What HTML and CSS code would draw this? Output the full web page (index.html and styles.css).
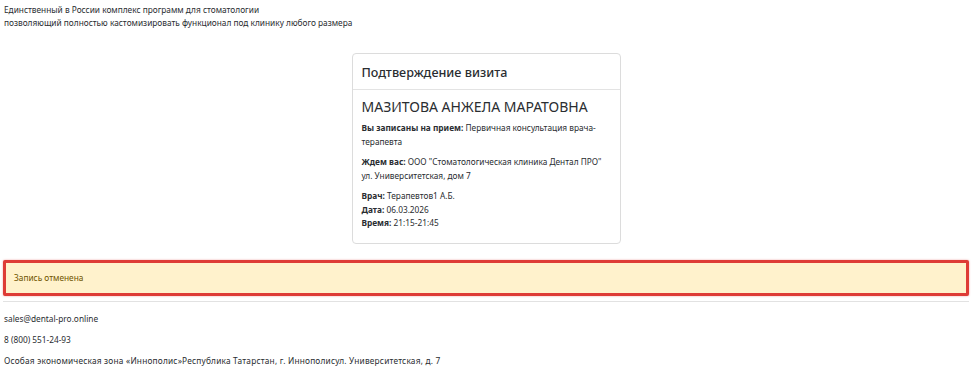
FILE: index.html
```html
<!DOCTYPE html>
<html lang="ru">
<head>
  <meta charset="UTF-8" />
  <meta name="viewport" content="width=device-width, initial-scale=1.0" />
  <title>Подтверждение визита</title>
  <link rel="stylesheet" href="styles.css">
</head>
<body>
  <div class="intro">
    <p>Единственный в России комплекс программ для стоматологии</p>
    <p>позволяющий полностью кастомизировать функционал под клинику любого размера</p>
  </div>

  <div class="card">
    <div class="card-header">Подтверждение визита</div>
    <div class="card-body">
      <h2 class="patient">МАЗИТОВА АНЖЕЛА МАРАТОВНА</h2>
      <p><b>Вы записаны на прием:</b> Первичная консультация врача-терапевта</p>
      <p><b>Ждем вас:</b> ООО "Стоматологическая клиника Дентал ПРО" ул. Университетская, дом 7</p>
      <p>
        <b>Врач:</b> Терапевтов1 А.Б.<br>
        <b>Дата:</b> 06.03.2026<br>
        <b>Время:</b> 21:15-21:45
      </p>
    </div>
  </div>

  <div class="alert">Запись отменена</div>

  <hr>

  <footer class="footer">
    <p>sales@dental-pro.online</p>
    <p>8 (800) 551-24-93</p>
    <p class="address">Особая экономическая зона «Иннополис»Республика Татарстан, г. Иннополисул. Университетская, д. 7</p>
  </footer>
</body>
</html>
```

FILE: styles.css
```css
body {
  margin: 0;
  padding: 0 3px;
  font-family: "Noto Sans", "Open Sans", sans-serif;
  font-size: 8.3px;
  line-height: 13px;
  color: #2a2d31;
  background: #fff;
}
p {
  margin: 0;
}
.intro {
  padding: 3px 1px 0;
}
.card {
  width: 267px;
  margin: 24px auto 0;
  border: 1px solid #dcdcdc;
  border-radius: 4px;
  background: #fff;
}
.card-header {
  padding: 0 9px;
  height: 35px;
  line-height: 37px;
  font-size: 12.6px;
  font-weight: 500;
  border-bottom: 1px solid #e3e3e3;
}
.card-body {
  padding: 7px 9px 13px;
}
.patient {
  margin: 0 0 4px;
  font-size: 14px;
  font-weight: 400;
  line-height: 20px;
}
.card-body p {
  line-height: 13.5px;
  margin-bottom: 7px;
}
.card-body p:last-child {
  margin-bottom: 0;
}
.alert {
  margin: 16px 0 0;
  padding: 0 8px;
  height: 30px;
  line-height: 30px;
  background: #fff2cc;
  color: #6e5200;
  border: 3px solid #de3c36;
  border-radius: 2px;
  box-shadow: 0 0 2px rgba(222, 60, 54, 0.5);
}
hr {
  margin: 5px 0 0;
  border: 0;
  border-top: 1px solid #e2e2e2;
}
.footer {
  padding: 10px 1px 0;
}
.footer p {
  margin-bottom: 8px;
}
.address {
  letter-spacing: 0.2px;
}
```
